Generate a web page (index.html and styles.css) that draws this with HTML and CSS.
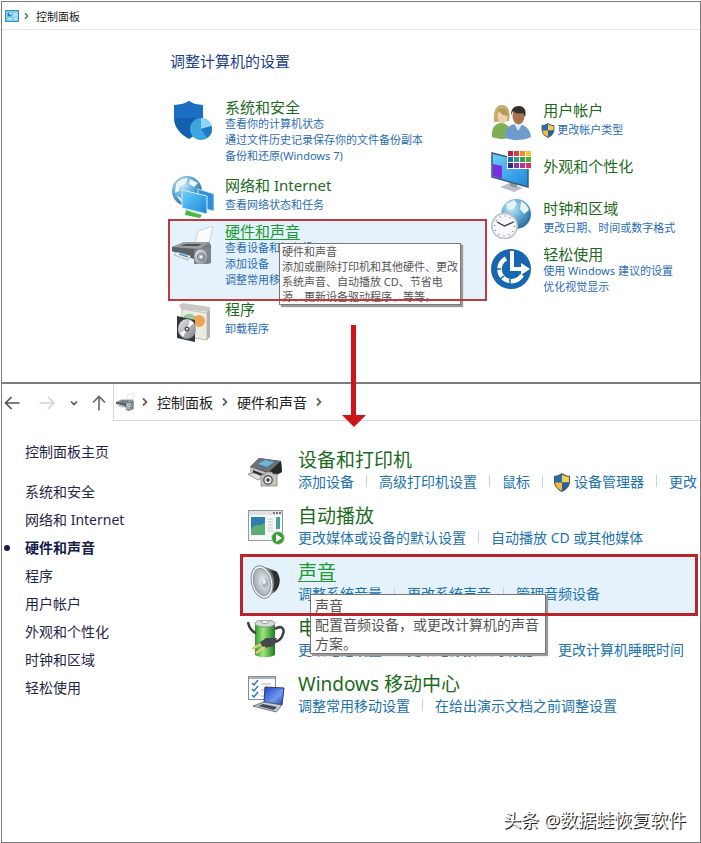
FILE: index.html
```html
<!DOCTYPE html>
<html lang="zh-CN">
<head>
<meta charset="utf-8">
<meta name="viewport" content="width=device-width, initial-scale=1">
<title>控制面板</title>
<link rel="stylesheet" href="styles.css">
</head>
<body>
<svg class="defs" aria-hidden="true">
  <defs>
    <linearGradient id="screen" x1="0" y1="0" x2="1" y2="1"><stop offset="0" stop-color="#6fd0fb"/><stop offset="1" stop-color="#1a86d8"/></linearGradient>
    <linearGradient id="steel" x1="0" y1="0" x2="1" y2="1"><stop offset="0" stop-color="#e6e8ea"/><stop offset="1" stop-color="#7d8389"/></linearGradient>
    <linearGradient id="dark" x1="0" y1="0" x2="0" y2="1"><stop offset="0" stop-color="#8a8f94"/><stop offset="1" stop-color="#33373b"/></linearGradient>
    <radialGradient id="globe" cx=".35" cy=".3" r=".8"><stop offset="0" stop-color="#c9e9f8"/><stop offset=".5" stop-color="#5da9d6"/><stop offset="1" stop-color="#245f91"/></radialGradient>
    <radialGradient id="cone" cx=".6" cy=".5" r=".6"><stop offset="0" stop-color="#eef2f4"/><stop offset="1" stop-color="#9aa5ac"/></radialGradient>
    <linearGradient id="green" x1="0" y1="0" x2="1" y2="0"><stop offset="0" stop-color="#2f9a2c"/><stop offset=".4" stop-color="#9be77c"/><stop offset="1" stop-color="#1d7c20"/></linearGradient>
    <linearGradient id="laptop" x1="0" y1="0" x2="1" y2="1"><stop offset="0" stop-color="#1a3fc4"/><stop offset=".6" stop-color="#6f9bf0"/><stop offset="1" stop-color="#1b3fae"/></linearGradient>
  </defs>
  <symbol id="shield" viewBox="0 0 18 20">
    <path d="M9 0C6 2 3 3 .5 3v6c0 5 4 9 8.500 11C13.500 18 17.500 14 17.500 9V3C15 3 12 2 9 0z" fill="#4b5a66"/>
    <path d="M9 1.500C6.500 3 4 3.900 1.700 4v6H9z" fill="#2a6cb4"/><path d="M9 1.500c2.500 1.500 5 2.400 7.300 2.500v6H9z" fill="#f5cf52"/>
    <path d="M1.700 10H9v8.600C5 17 2 14 1.700 10z" fill="#f2bf3a"/><path d="M16.300 10H9v8.600c4-1.600 7-4.600 7.300-8.600z" fill="#255f9f"/>
  </symbol>
  <symbol id="printer" viewBox="0 0 42 42">
    <path d="M23 18l3-13 15-5-4 19z" fill="#fafbfc" stroke="#c3c8cc" stroke-width=".8"/>
    <path d="M0 21l12-5 25 0 2 3v10l-14 5L0 25z" fill="url(#dark)"/>
    <path d="M0 21l12-5h25l-9 7z" fill="#9a9fa4"/><path d="M8 20l6-2h16l-4 2z" fill="#4b5055"/>
    <path d="M0 21v4l25 8v-9z" fill="#5b6065"/><path d="M5 26l-3 3 14 5 3-4z" fill="#eef1f3" stroke="#8b9298" stroke-width=".6"/>
    <path d="M7 28l9 3" stroke="#4b9ad0" stroke-width="1.500"/>
    <path d="M22 24l12-3 5 1v15l-12 4-5-3z" fill="#7b848c"/><ellipse cx="29" cy="31" rx="7" ry="8" fill="url(#steel)" stroke="#656d74" stroke-width=".6"/><circle cx="29" cy="31" r="3.500" fill="none" stroke="#6c747b"/><circle cx="29" cy="31" r="1.300" fill="#fff"/>
  </symbol>
  <symbol id="chevron" viewBox="0 0 6 10"><path d="M1 1.500l3.500 3.500L1 8.500" fill="none" stroke="#666" stroke-width="1.800"/></symbol>
</svg>

<div class="page">
  <section class="home">
    <nav class="crumbs" aria-label="位置">
      <svg class="crumb-icon" viewBox="0 0 14 12" aria-hidden="true"><rect x=".5" y=".5" width="13" height="11" fill="#7fcdec" stroke="#3a8fc0"/><circle cx="4.500" cy="4.500" r="2" fill="#2b7ebb"/><path d="M4.500 4.500V2.500a2 2 0 0 1 2 2z" fill="#fff"/><path d="M8.500 4H12M8.500 6H12M3 9h4M9 9h3" stroke="#e9f8ff"/></svg>
      <svg class="chevron small" aria-hidden="true"><use href="#chevron"/></svg>
      <a href="#">控制面板</a>
    </nav>
    <h1>调整计算机的设置</h1>
    <div class="categories">
      <div class="column">
        <div class="category">
          <svg class="icon" viewBox="0 -3 42 42" aria-hidden="true">
            <path d="M17 0C12 3 7 4 2 4v13c0 9 6 16 15 21 9-5 14-12 14-21V4C26 4 21 3 17 0z" fill="#1560ae"/>
            <path d="M17 0c4 3 9 4 14 4v13L2 17V4C7 4 12 3 17 0z" fill="#1a6fc4"/>
            <circle cx="29" cy="28" r="11" fill="#3aa5df"/><path d="M29 28V17a11 11 0 0 1 10.500 8z" fill="#8fd6f6"/><path d="M29 28l10.500-3A11 11 0 0 1 35 37z" fill="#1d7cc4"/>
          </svg>
          <div>
            <h2><a href="#">系统和安全</a></h2>
            <ul><li><a href="#">查看你的计算机状态</a></li><li><a href="#">通过文件历史记录保存你的文件备份副本</a></li><li><a href="#">备份和还原(Windows 7)</a></li></ul>
          </div>
        </div>
        <div class="category single">
          <svg class="icon" viewBox="0 0 42 42" aria-hidden="true">
            <circle cx="15" cy="15" r="15" fill="url(#globe)"/><path d="M4 8c3-4 8-6 12-6l-3 6-5 2-1 5-4 2zM18 3l8 4-4 4-5-3zM4 19l5 3 1 5z" fill="#edf5f3"/>
            <path d="M26 13l16 5v17l-16-4z" fill="#2f8fd4" stroke="#bfe4f8"/><path d="M10 14l25 6v18l-25-6z" fill="url(#screen)" stroke="#d7eefb"/>
            <path d="M14 34l16 5-2 3-15-3z" fill="#4cb648"/><path d="M19 35l8 2" stroke="#c8efbd" stroke-width="2"/>
          </svg>
          <div><h2><a href="#">网络和 Internet</a></h2><ul><li><a href="#">查看网络状态和任务</a></li></ul></div>
        </div>
        <div class="category selected">
          <svg class="icon" viewBox="0 -4 42 42" aria-hidden="true"><use href="#printer" width="42" height="42"/></svg>
          <div>
            <h2><a href="#">硬件和声音</a></h2>
            <ul><li><a href="#">查看设备和打印机</a></li><li><a href="#">添加设备</a></li><li><a href="#">调整常用移动设置</a></li></ul>
          </div>
          <div class="tooltip" role="tooltip">硬件和声音<br>添加或删除打印机和其他硬件、更改<br>系统声音、自动播放 CD、节省电<br>源、更新设备驱动程序、等等。</div>
        </div>
        <div class="category single">
          <svg class="icon" viewBox="0 -3 42 42" aria-hidden="true">
            <path d="M10 6l25 4v27l-25-4z" fill="#eceae5" stroke="#c0bdb6"/><path d="M7 2l4-2 27 4-1 5-28-3z" fill="#c9c8c4"/><path d="M35 9l3-3v28l-3 3z" fill="#b5b3ae"/>
            <path d="M12 13c4-4 10-2 12 2l-4 6-8-3z" fill="#93cba0"/><circle cx="27" cy="18" r="6" fill="#eda452"/>
            <path d="M5 13l18 4v22L5 35z" fill="#34383d"/><ellipse cx="15" cy="26" rx="9" ry="10" fill="url(#steel)"/><path d="M15 26l3-9 4 3zM15 26l-4 8-3-4z" fill="#fff"/><circle cx="15" cy="26" r="2.500" fill="#555"/><circle cx="15" cy="26" r="1" fill="#fff"/>
          </svg>
          <div><h2><a href="#">程序</a></h2><ul><li><a href="#">卸载程序</a></li></ul></div>
        </div>
      </div>
      <div class="column right">
        <div class="category single">
          <svg class="icon" viewBox="0 1 42 42" aria-hidden="true">
            <path d="M1 31c0-7 4-11 9-11s9 4 10 8v6c-6 3-14 2-19 0z" fill="#7fae54"/><path d="M3 19C2 8 5 2 11 2s9 6 7 16z" fill="#c5ae6c"/><ellipse cx="11.500" cy="13" rx="5" ry="7.500" fill="#f3cfae"/><path d="M5 11c2-6 8-7 11-3l1 5c-4 0-8-3-9-5z" fill="#b39a55"/>
            <path d="M14 34c0-9 5-13 12-13s13 4 14 13c-7 4-20 4-26 0z" fill="#6d9bcd"/><path d="M23 20l4 8 5-8z" fill="#e6eff8"/>
            <ellipse cx="27.500" cy="13" rx="6" ry="8.500" fill="#a97350"/><path d="M20 12c0-6 3-9 8-9s8 4 6 11l-2-4c-4 1-9 0-10-2z" fill="#36302c"/>
          </svg>
          <div><h2><a href="#">用户帐户</a></h2><ul><li class="with-shield"><svg class="shield" aria-hidden="true"><use href="#shield"/></svg><a href="#">更改帐户类型</a></li></ul></div>
        </div>
        <div class="category">
          <svg class="icon" viewBox="0 2 42 42" aria-hidden="true">
            <path d="M9 38l9-4 14 5-9 4z" fill="#b9bfc5"/><path d="M19 33l7 2v4l-7-2z" fill="#8f979e"/><path d="M1 4l36 9v25L1 28z" fill="url(#screen)" stroke="#395a78" stroke-width="1.500"/><path d="M2 15l9 2v13l-9-3z" fill="#7a2ee0"/>
            <path d="M16 1h25v19H16z" fill="#fff"/>
            <path d="M17 2h5v5h-5z" fill="#b5214c"/><path d="M23 2h5v5h-5z" fill="#d8443c"/><path d="M29 2h5v5h-5z" fill="#f08a32"/><path d="M35 2h5v5h-5z" fill="#f6c432"/>
            <path d="M17 8h5v5h-5z" fill="#1e6bb8"/><path d="M23 8h5v5h-5z" fill="#2f9d8c"/><path d="M29 8h5v5h-5z" fill="#3f9e43"/><path d="M35 8h5v5h-5z" fill="#4fab3e"/>
            <path d="M17 14h5v5h-5z" fill="#312a8c"/><path d="M23 14h5v5h-5z" fill="#7f3aa4"/><path d="M29 14h5v5h-5z" fill="#c0308c"/><path d="M35 14h5v5h-5z" fill="#d9306a"/>
          </svg>
          <div><h2><a href="#">外观和个性化</a></h2></div>
        </div>
        <div class="category single">
          <svg class="icon" viewBox="0 -2 42 42" aria-hidden="true">
            <circle cx="25" cy="15" r="15" fill="url(#globe)"/><path d="M15 5l8-4 3 4-4 5-5 1zM30 2c4 2 7 5 8 9l-5 4-4-5z" fill="#e9f3f2"/>
            <circle cx="13.500" cy="27" r="13.500" fill="#bcc3c9"/><circle cx="13.500" cy="27" r="11.800" fill="#f7f8f9"/>
            <circle cx="13.500" cy="27" r="10" fill="none" stroke="#7d858c" stroke-width="1.500" stroke-dasharray="1 4.240"/><path d="M6 23l7.500 4 9-4" fill="none" stroke="#30363b" stroke-width="1.300"/>
          </svg>
          <div><h2><a href="#">时钟和区域</a></h2><ul><li><a href="#">更改日期、时间或数字格式</a></li></ul></div>
        </div>
        <div class="category">
          <svg class="icon" viewBox="0 0 42 42" aria-hidden="true">
            <circle cx="20" cy="20" r="20" fill="#1766b2"/><path d="M15 9.500A12 12 0 1 0 31 26" fill="none" stroke="#fff" stroke-width="4.500"/>
            <path d="M21 2v18h10" fill="none" stroke="#fff" stroke-width="4"/><path d="M30 14l9 6-9 6z" fill="#fff"/><path d="M5 20h5M19 30v6M9 30l4-3" stroke="#1766b2" stroke-width="1.500"/>
          </svg>
          <div><h2><a href="#">轻松使用</a></h2><ul><li><a href="#">使用 Windows 建议的设置</a></li><li><a href="#">优化视觉显示</a></li></ul></div>
        </div>
      </div>
    </div>
    <svg class="arrow" viewBox="0 0 24 102" aria-hidden="true"><path d="M9 0h5v90h10L12 102 0 90h9z" fill="#cc1519"/></svg>
  </section>

  <section class="detail">
    <div class="toolbar">
      <div class="history">
        <button type="button" aria-label="后退"><svg viewBox="0 0 16 16"><path d="M15.500 8H1.500M7.500 2l-6 6 6 6" fill="none" stroke="#555" stroke-width="1.700"/></svg></button>
        <button type="button" aria-label="前进"><svg viewBox="0 0 16 16"><path d="M.5 8h14M9 2l6 6-6 6" fill="none" stroke="#d2d2d2" stroke-width="1.500"/></svg></button>
        <button type="button" class="recent" aria-label="最近浏览的位置"><svg viewBox="0 0 8 8"><path d="M1 2.500l3 3 3-3" fill="none" stroke="#555" stroke-width="1.600"/></svg></button>
        <button type="button" aria-label="上移"><svg viewBox="0 0 16 16"><path d="M8 15.500V1.500M2 7.500l6-6 6 6" fill="none" stroke="#666" stroke-width="1.600"/></svg></button>
      </div>
      <nav class="address" aria-label="地址">
        <svg class="address-icon" aria-hidden="true"><use href="#printer"/></svg>
        <svg class="chevron" aria-hidden="true"><use href="#chevron"/></svg>
        <a href="#">控制面板</a>
        <svg class="chevron" aria-hidden="true"><use href="#chevron"/></svg>
        <a href="#">硬件和声音</a>
        <svg class="chevron" aria-hidden="true"><use href="#chevron"/></svg>
      </nav>
    </div>
    <div class="body">
      <nav class="sidebar" aria-label="类别">
        <a class="top" href="#">控制面板主页</a>
        <a href="#">系统和安全</a>
        <a href="#">网络和 Internet</a>
        <a class="current" href="#" aria-current="page">硬件和声音</a>
        <a href="#">程序</a>
        <a href="#">用户帐户</a>
        <a href="#">外观和个性化</a>
        <a href="#">时钟和区域</a>
        <a href="#">轻松使用</a>
      </nav>
      <main class="items">
        <div class="item">
          <svg class="icon" viewBox="0 0 40 40" aria-hidden="true">
            <path d="M3 15L12 6l22 3 1 11-16 7-16-7z" fill="#4a4e52"/><path d="M3 15l9-9 22 3-12 11z" fill="#6b7075"/><path d="M11 12l7-4 9 2-7 5z" fill="#69b5dc"/><path d="M22 20l12-11 1 11-13 7z" fill="#24282b"/>
            <path d="M3 15v6l18 7v-7z" fill="#bfc3c6"/><path d="M6 18l13 5v3L6 21z" fill="#2b2f33"/><path d="M1 22l6-1 10 4-6 3z" fill="#dfe3e5" stroke="#71787e" stroke-width=".7"/>
            <path d="M14 23l4-1 1-2h6l1 2h4v12H14z" fill="#c9c5be" stroke="#77736c" stroke-width=".7"/><circle cx="21" cy="28" r="5" fill="#595c60"/><circle cx="21" cy="28" r="3.500" fill="#e5e7e9"/><circle cx="21" cy="28" r="1.700" fill="#33373b"/>
          </svg>
          <div>
            <h2><a href="#">设备和打印机</a></h2>
            <ul><li><a href="#">添加设备</a></li><li><a href="#">高级打印机设置</a></li><li><a href="#">鼠标</a></li><li class="with-shield"><svg class="shield" aria-hidden="true"><use href="#shield"/></svg><a href="#">设备管理器</a></li><li><a href="#">更改</a></li></ul>
          </div>
        </div>
        <div class="item">
          <svg class="icon" viewBox="0 1 40 40" aria-hidden="true">
            <rect x="1.500" y="3.500" width="34" height="30" fill="#f5f7f8" stroke="#8f989f"/><path d="M2 4h33v4H2z" fill="#dde2e5"/><path d="M26 6h2M29 6h2M32 6h2" stroke="#555" stroke-width="1.500"/>
            <path d="M4 10h14v18H4z" fill="#2e7fb0"/><path d="M4 22c5-7 9-1 14-7v13H4z" fill="#5aae72"/><path d="M21 12h5M21 15h5M21 18h5M21 21h5M21 24h5" stroke="#bcc4c9"/><path d="M29 10h4v12h-4z" fill="#4a9f9d"/>
            <circle cx="31" cy="31" r="6.500" fill="#3c9a35" stroke="#cfe6cb"/><path d="M29 27l6 4-6 4z" fill="#fff"/>
          </svg>
          <div><h2><a href="#">自动播放</a></h2><ul><li><a href="#">更改媒体或设备的默认设置</a></li><li><a href="#">自动播放 CD 或其他媒体</a></li></ul></div>
        </div>
        <div class="item selected">
          <svg class="icon" viewBox="0 3 40 40" aria-hidden="true">
            <path d="M14 5l13 4c6 4 7 17 1 22l-12 6z" fill="#6b7074"/><path d="M23 10c5 3 6 16 1 21l5-2c5-5 5-14 0-19z" fill="#2e3134"/>
            <ellipse cx="15" cy="21" rx="10.500" ry="16.500" transform="rotate(-14 15 21)" fill="#f4f5f6" stroke="#888e93"/><ellipse cx="15" cy="21" rx="8.500" ry="14" transform="rotate(-14 15 21)" fill="url(#cone)" stroke="#8d959b" stroke-width=".8"/><ellipse cx="18" cy="22" rx="3.500" ry="4.500" fill="#aab8c1"/><ellipse cx="17" cy="20.500" rx="1.700" ry="2.500" fill="#edf3f6"/>
          </svg>
          <div><h2><a href="#">声音</a></h2><ul><li><a href="#">调整系统音量</a></li><li><a href="#">更改系统声音</a></li><li><a href="#">管理音频设备</a></li></ul></div>
          <div class="tooltip" role="tooltip">声音<br>配置音频设备，或更改计算机的声音<br>方案。</div>
        </div>
        <div class="item">
          <svg class="icon" viewBox="0 3 40 40" aria-hidden="true">
            <path d="M8 6h20v32c-5 3-15 3-20 0z" fill="url(#green)"/><ellipse cx="18" cy="6.500" rx="10" ry="3.500" fill="#d7ddd9" stroke="#8b9890"/><ellipse cx="18" cy="5" rx="4" ry="1.500" fill="#f6f8f7" stroke="#98a19b"/>
            <path d="M1 5c1 6 3 9 8 11M28 12c6-4 10-1 8 5-1 4-4 7-8 8" fill="none" stroke="#3c4144" stroke-width="2.500"/><path d="M12 26l7-5 11 0-3 8-10 2z" fill="#44484b"/><path d="M14 27l-9 5M18 30l-9 6" stroke="#e4cd72" stroke-width="2.500"/>
          </svg>
          <div><h2><a href="#">电源选项</a></h2><ul><li><a href="#">更改电池设置</a></li><li><a href="#">更改电源按钮的功能</a></li><li><a href="#">更改计算机睡眠时间</a></li></ul></div>
        </div>
        <div class="item">
          <svg class="icon" viewBox="0 2 40 40" aria-hidden="true">
            <rect x="1.500" y="2.500" width="27" height="23" fill="#fdfdfe" stroke="#858d94"/><path d="M2 4h26" stroke="#8d9aaa" stroke-width="1.500"/>
            <path d="M5 9l2 2 4-5M5 15l2 2 4-5M5 21l2 2 4-5" fill="none" stroke="#2f77bd" stroke-width="1.500"/><path d="M14 10h10M14 16h6M14 22h4" stroke="#aab4bc"/>
            <path d="M18 13l19 1-2 17-18-3z" fill="url(#laptop)" stroke="#2b3a63"/><path d="M17 28l18 3-6 7-23-6z" fill="#c8ced4" stroke="#525b65" stroke-width=".8"/><path d="M16 30l14 3-3 3-16-4z" fill="#454d56"/>
          </svg>
          <div><h2><a href="#">Windows 移动中心</a></h2><ul><li><a href="#">调整常用移动设置</a></li><li><a href="#">在给出演示文档之前调整设置</a></li></ul></div>
        </div>
      </main>
    </div>
    <footer class="credit">头条 @数据蛙恢复软件</footer>
  </section>
</div>
</body>
</html>
```
FILE: styles.css
```css
* { box-sizing: border-box; }

body {
  margin: 0;
  background: #fff;
  color: #222;
  font-family: "Noto Sans", "Noto Sans CJK SC", sans-serif;
}

a { color: inherit; text-decoration: none; }
ul { list-style: none; margin: 0; padding: 0; }
h1, h2 { margin: 0; font-weight: 400; }
svg { display: block; flex: none; }
.defs { position: absolute; width: 0; height: 0; }

.page {
  display: flex;
  flex-direction: column;
  min-height: calc(100vh - 1px);
  margin: 1px 0 0 1px;
  border: 1px solid #7c7c7c;
  overflow: hidden;
}

.chevron { width: 6px; height: 10px; }
.chevron.small { width: 5px; height: 8px; }

.tooltip {
  position: absolute;
  z-index: 2;
  border: 1px solid #777;
  background: #fff;
  box-shadow: 2px 2px 1px #999;
  color: #555;
  white-space: nowrap;
}

.selected { position: relative; }
.selected::before,
.selected::after {
  content: "";
  position: absolute;
  inset: 0 0 -4px;
}
.selected::before { z-index: -1; background: #e5f2fc; }
.selected::after { z-index: 3; border: 2px solid #bd3a40; pointer-events: none; }
.selected h2 a { color: #1a9a30; text-decoration: underline; text-decoration-thickness: 1px; text-underline-offset: 2px; }

/* Control panel home */
.home {
  position: relative;
  z-index: 1;
  border-bottom: 2px solid #7c7c7c;
  padding-bottom: 39px;
}

.crumbs {
  display: flex;
  align-items: center;
  height: 28px;
  padding-left: 3px;
  border-bottom: 1px solid #e4e4e4;
  font-size: 11px;
}
.crumb-icon { width: 14px; height: 12px; }
.crumbs .chevron { margin: 0 7px 0 5px; }

.home h1 {
  margin: 21px 0 24px 168px;
  color: #1f3f8a;
  font-size: 15px;
  line-height: 20px;
}

.categories {
  display: grid;
  grid-template-columns: 3fr 2fr;
  padding-left: 166px;
  isolation: isolate;
}

.category {
  display: flex;
  align-items: flex-start;
  gap: 11px;
  padding: 3px 0 9px 4px;
}
.category.single { padding-bottom: 6px; }
.category .icon { width: 42px; height: 42px; margin-bottom: -12px; }
.category h2 { color: #1c6a1c; font-size: 15px; line-height: 18px; }
.category li { color: #2a6db5; font-size: 11px; line-height: 16px; white-space: nowrap; }
.category.single ul { margin-top: 3px; }
.category .tooltip {
  top: 24px;
  left: 111px;
  padding: 0 2px;
  font-size: 11px;
  line-height: 15px;
}

.column.right {
  display: grid;
  grid-template-rows: 56px 42px 46px auto;
  align-content: start;
  padding-top: 3px;
}
.right .category { gap: 10px; }
.right .icon { align-self: center; margin: -6px 0; }

.with-shield { display: flex; align-items: center; gap: 2px; }
.category .shield { width: 14px; height: 15px; margin-left: -2px; }

.arrow {
  position: absolute;
  z-index: 4;
  bottom: -45px;
  left: 49%;
  width: 24px;
  height: 102px;
  margin-left: -2px;
}

/* Hardware and sound */
.detail { display: flex; flex: 1; flex-direction: column; }

.toolbar { display: flex; height: 37px; }
.history { display: flex; align-items: center; width: 111px; padding-left: 2px; }
.history button {
  width: 16px;
  margin-right: 19px;
  padding: 0;
  border: 0;
  background: none;
}
.history .recent { width: 8px; margin: 0 13px 0 -4px; }
.history button:last-child { margin: 0; }

.address {
  display: flex;
  flex: 1;
  align-items: center;
  gap: 9px;
  padding-left: 2px;
  border: solid #d9d9d9;
  border-width: 0 0 1px 1px;
  font-size: 14px;
}
.address-icon { width: 19px; height: 20px; margin-right: -2px; }

.body {
  display: grid;
  grid-template-columns: 238px minmax(0, 1fr);
  padding: 17px 2px 0 0;
  font-size: 14px;
}

.sidebar { display: flex; flex-direction: column; color: #1f2747; }
.sidebar a { padding-left: 23px; line-height: 28px; }
.sidebar .top { margin-bottom: 12px; }
.sidebar .current {
  display: flex;
  align-items: center;
  gap: 15px;
  padding-left: 2px;
  color: #151d4a;
  font-weight: 700;
}
.sidebar .current::before {
  content: "";
  width: 6px;
  height: 6px;
  border-radius: 50%;
  background: #151d4a;
}

.items { isolation: isolate; padding-top: 4px; }
.item { display: grid; grid-template-columns: 40px minmax(0, 1fr); gap: 11px; padding: 6px 0 6px 7px; }
.item .icon { width: 40px; height: 40px; margin-top: 4px; }
.item h2 { color: #1c6a1c; font-size: 19px; line-height: 24px; }
.item ul { display: flex; color: #2272b0; line-height: 20px; white-space: nowrap; }
.item li { flex: none; }
.item li + li::before {
  content: "";
  align-self: center;
  display: inline-block;
  width: 1px;
  height: 12px;
  margin: 0 12px;
  background: #c3d3e0;
}
.item .with-shield { gap: 0; }
.item .shield { width: 18px; height: 19px; margin: 0 3px 0 -2px; }
.item.selected::before,
.item.selected::after { bottom: -6px; }
.item.selected::after { border: 3px solid #b8242c; }
.item .tooltip { top: 40px; left: 70px; padding: 1px 6px 0 4px; line-height: 19px; }

.credit {
  margin-top: auto;
  padding: 0 14px 9px;
  color: #fff;
  font-size: 18px;
  line-height: 26px;
  text-align: right;
  text-shadow: 1px 1px 0 #222, 1px 1px 1px #777;
}
```
